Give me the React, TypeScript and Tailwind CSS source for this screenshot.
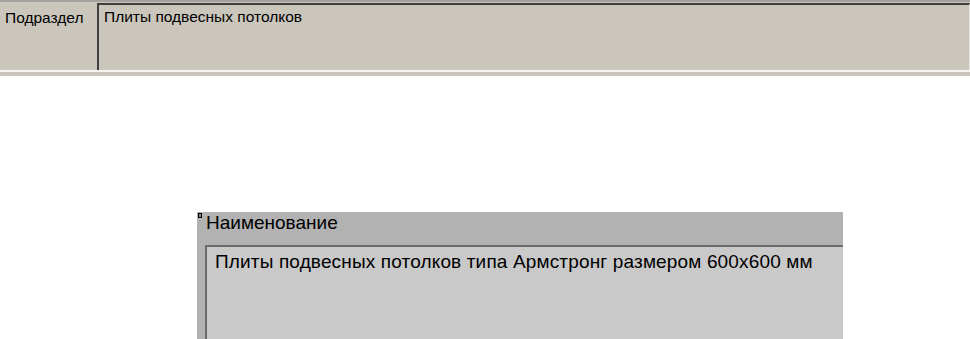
export default function App() {
  return (
    <div className="w-[970px] h-[339px] bg-white overflow-hidden font-['Liberation_Sans',Arial,sans-serif] text-black">
      {/* верхняя строка формы */}
      <div className="h-[70px] bg-[#cac6bc] border-t-2 border-[#a4a29c] flex">
        <div className="w-[97px] pt-[7px] pl-[5px] text-[15.5px] leading-[18px]">Подраздел</div>
        <div className="flex-1 border-t-[2px] border-l-[2px] border-r border-t-[#3c3c3c] border-l-[#404040] border-r-[#e8e6e0] mt-px pl-[5px] pt-[3px] text-[15.5px] leading-[18px]">
          Плиты подвесных потолков
        </div>
      </div>
      <div className="h-[2px] bg-[#f6f4ee]" />
      <div className="h-[4px] bg-[#cac6bc]" />

      {/* блок наименования */}
      <div className="mt-[136px] ml-[197px] w-[646px] h-[127px] bg-[#b2b2b2] relative flex flex-col">
        <div className="absolute left-[1px] top-[1px] w-[4px] h-[5px] border border-black bg-[#888]" />
        <div className="pl-[9px] h-[33px] text-[19px] leading-[22px]">Наименование</div>
        <div className="ml-[8px] flex-1 bg-[#c9c9c9] border-t-2 border-l-2 border-[#6c6c6c] pl-[8px] pt-[4px] text-[19px] leading-[22px] tracking-[0.15px]">
          Плиты подвесных потолков типа Армстронг размером 600x600 мм
        </div>
      </div>
    </div>
  );
}
